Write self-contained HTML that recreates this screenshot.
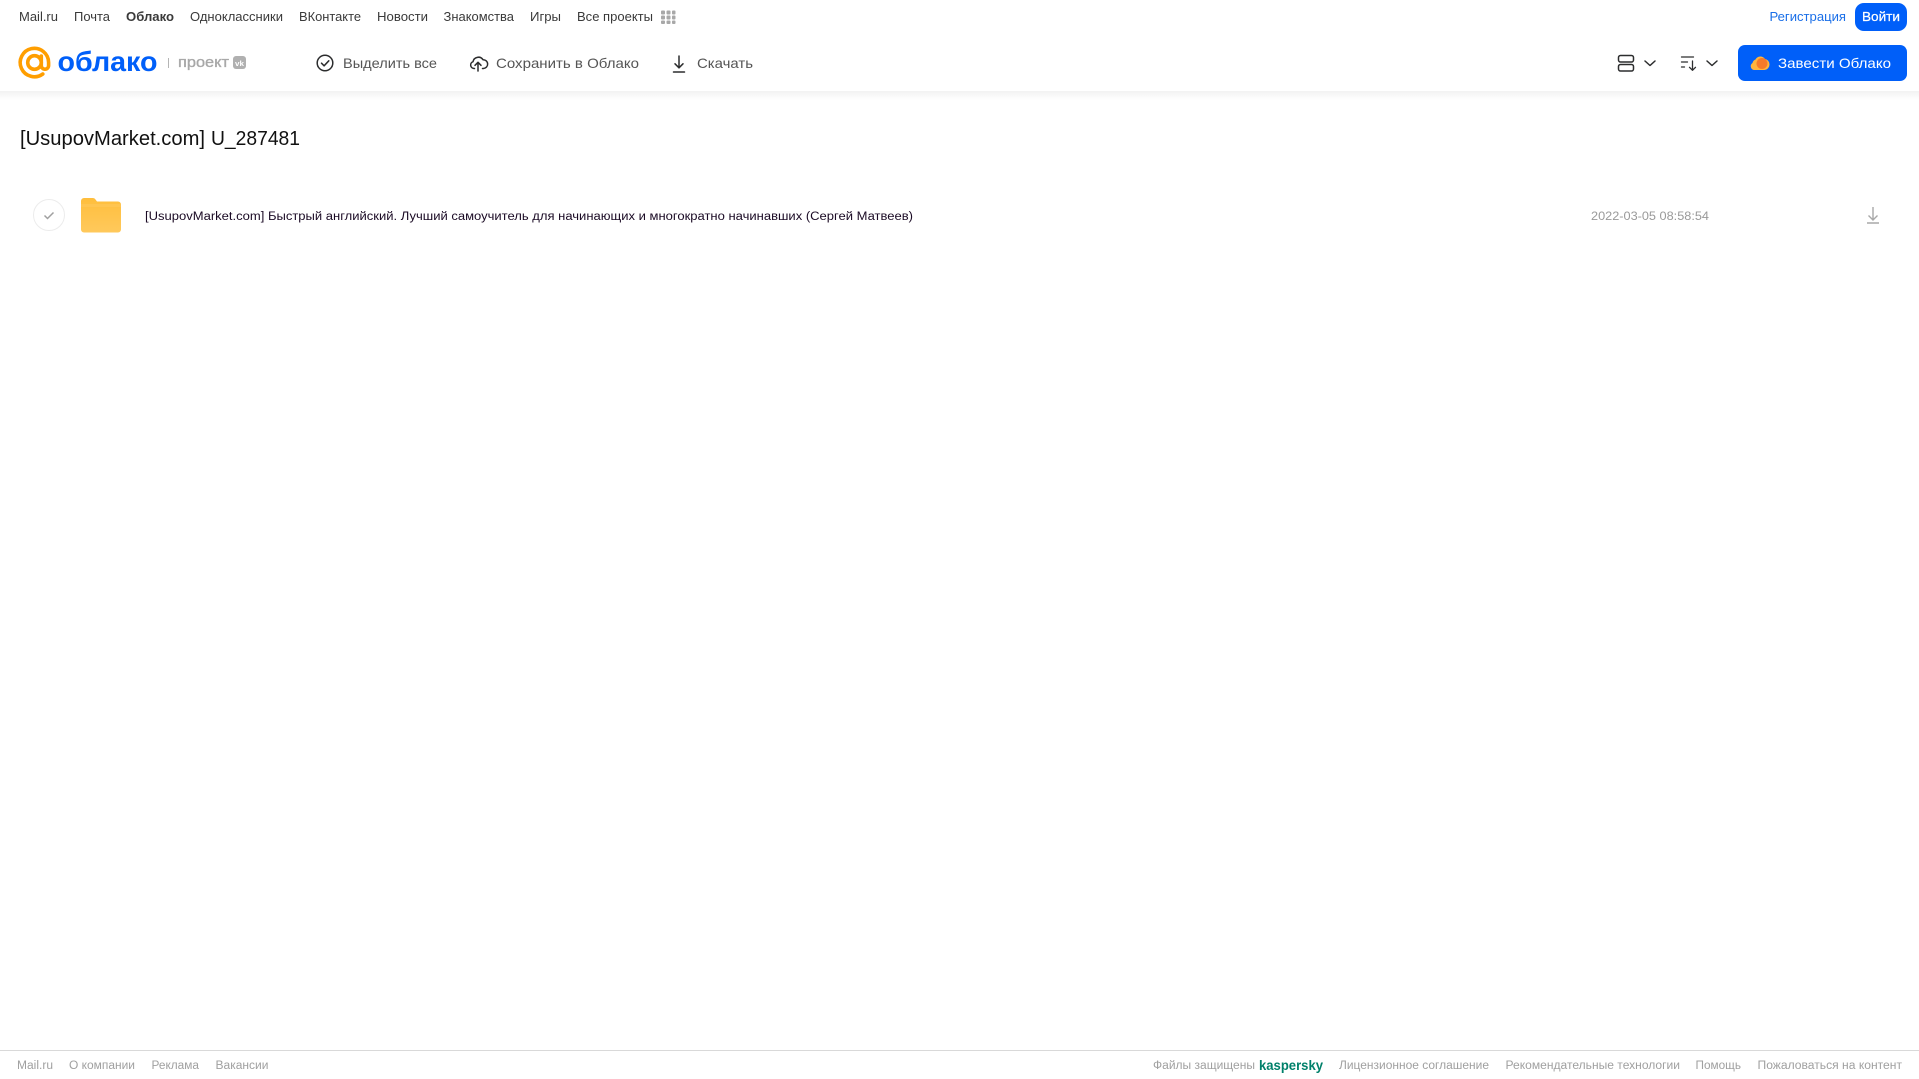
<!DOCTYPE html>
<html lang="ru"><head><meta charset="utf-8"><title>Облако</title>
<style>
html,body{margin:0;padding:0;background:#fff;width:1919px;height:1079px;overflow:hidden}
svg{display:block;position:absolute;left:0;top:0}
text{font-family:"Liberation Sans","Noto Sans CJK SC",sans-serif;white-space:pre}
.n{font-size:12.500px;fill:#3a3a3a}
.t{font-size:14px;fill:#555}
.f{font-size:11.500px;fill:#a0a0a0}
</style></head><body>
<svg width="1919" height="1079" viewBox="0 0 1919 1079" xmlns="http://www.w3.org/2000/svg">
<defs>
<linearGradient id="sh" x1="0" y1="0" x2="0" y2="1"><stop offset="0" stop-color="#f2f2f2"/><stop offset="1" stop-color="#fff"/></linearGradient>
<linearGradient id="fo" x1="0" y1="0" x2="0" y2="1"><stop offset="0" stop-color="#ffbe3c"/><stop offset="1" stop-color="#ffc95c"/></linearGradient>
</defs>
<rect x="0" y="91" width="1919" height="9" fill="url(#sh)"/>

<!-- top nav -->
<g class="n">
<text x="19" y="21" textLength="39" lengthAdjust="spacingAndGlyphs">Mail.ru</text>
<text x="74" y="21" textLength="36" lengthAdjust="spacingAndGlyphs">Почта</text>
<text x="126" y="21" textLength="48" lengthAdjust="spacingAndGlyphs" font-weight="700">Облако</text>
<text x="190" y="21" textLength="93" lengthAdjust="spacingAndGlyphs">Одноклассники</text>
<text x="299" y="21" textLength="62" lengthAdjust="spacingAndGlyphs">ВКонтакте</text>
<text x="377" y="21" textLength="51" lengthAdjust="spacingAndGlyphs">Новости</text>
<text x="443.500" y="21" textLength="70.500" lengthAdjust="spacingAndGlyphs">Знакомства</text>
<text x="530" y="21" textLength="31" lengthAdjust="spacingAndGlyphs">Игры</text>
<text x="577" y="21" textLength="76" lengthAdjust="spacingAndGlyphs">Все проекты</text>
</g>
<g fill="#a8a8a8">
<rect x="661" y="10.500" width="4" height="4" rx="1"/><rect x="666.500" y="10.500" width="4" height="4" rx="1"/><rect x="672" y="10.500" width="3.500" height="4" rx="1"/>
<rect x="661" y="15.500" width="4" height="4" rx="1"/><rect x="666.500" y="15.500" width="4" height="4" rx="1"/><rect x="672" y="15.500" width="3.500" height="4" rx="1"/>
<rect x="661" y="20.500" width="4" height="3.500" rx="1"/><rect x="666.500" y="20.500" width="4" height="3.500" rx="1"/><rect x="672" y="20.500" width="3.500" height="3.500" rx="1"/>
</g>
<text x="1769.500" y="21" font-size="12.500" fill="#1a6fe8" textLength="76.500" lengthAdjust="spacingAndGlyphs">Регистрация</text>
<rect x="1855" y="3" width="52" height="28" rx="9" fill="#005ff9"/>
<text x="1862" y="21" font-size="13" font-weight="400" fill="#fff" stroke="#fff" stroke-width=".25" textLength="38" lengthAdjust="spacingAndGlyphs">Войти</text>

<!-- logo -->
<g fill="none" stroke="#ff9e00" stroke-width="3.600" stroke-linecap="round">
<circle cx="34.500" cy="62.500" r="6.800"/>
<path d="M41.300 56 v9.500 a3.600 3.600 0 0 0 7.300 0 v-3 a14.200 14.200 0 1 0 -5.800 11.500"/>
</g>
<text x="57.500" y="71" font-size="28" font-weight="700" fill="#005ff9" textLength="100" lengthAdjust="spacingAndGlyphs">облако</text>
<rect x="168" y="58" width="1" height="10" fill="#b5b5b5"/>
<text x="178" y="67" font-size="14.500" font-weight="400" fill="#a8a8a8" stroke="#a8a8a8" stroke-width=".35" textLength="51" lengthAdjust="spacingAndGlyphs">проект</text>
<rect x="233" y="56" width="13" height="13" rx="3" fill="#b0b0b0"/>
<text x="235" y="66" font-size="7.500" font-weight="700" fill="#fff" textLength="9" lengthAdjust="spacingAndGlyphs">vk</text>

<!-- toolbar -->
<g fill="none" stroke="#2c2d2e" stroke-width="1.500" stroke-linecap="round" stroke-linejoin="round">
<circle cx="325" cy="63" r="7.800"/>
<path d="M321.500 63.200 l2.600 2.600 l4.700 -5"/>
<path d="M474.500 68.500 h-.5 a3.500 3.500 0 0 1 -1 -6.800 a5.500 5.500 0 0 1 10 -2 a4.400 4.400 0 0 1 .5 8.800 h-1"/>
<path d="M478 71 v-8.500 M475 65.300 l3 -3 l3 3"/>
<path d="M679 56 v11.500 M675 63.800 l4 4 l4 -4 M673.500 72 h11"/>
<rect x="1618.500" y="55.500" width="15" height="6.500" rx="2"/>
<rect x="1618.500" y="64.500" width="15" height="6.500" rx="2"/>
<path d="M1645 61 l5 4.500 l5 -4.500"/>
</g>
<g fill="none" stroke="#2c2d2e" stroke-width="1.300" stroke-linecap="round" stroke-linejoin="round">
<path d="M1681.500 57 h12 M1681.500 62 h6 M1681.500 67 h3 M1692.500 61 v9 M1689.500 67.300 l3 3 l3 -3"/>
<path d="M1707 61 l5 4.500 l5 -4.500" stroke-width="1.500"/>
</g>
<g class="t">
<text x="343" y="68" textLength="94" lengthAdjust="spacingAndGlyphs">Выделить все</text>
<text x="496" y="68" textLength="143" lengthAdjust="spacingAndGlyphs">Сохранить в Облако</text>
<text x="697" y="68" textLength="56" lengthAdjust="spacingAndGlyphs">Скачать</text>
</g>

<rect x="1738" y="45" width="169" height="36" rx="7" fill="#005ff9"/>
<path d="M1754.500 70 a3.800 3.800 0 0 1 -2 -7 c.5 -2 1.500 -3 3 -3.500 a5.500 5.500 0 0 1 9.500 -.5 a5.500 5.500 0 0 1 4.500 5.500 a5.500 5.500 0 0 1 -5 5.500 z" fill="#ffb43c"/>
<circle cx="1762" cy="63.500" r="5.500" fill="#f47a2a"/>
<text x="1778" y="68" font-size="14" fill="#fff" textLength="113" lengthAdjust="spacingAndGlyphs">Завести Облако</text>

<!-- title -->
<text x="20" y="145" font-size="20" fill="#111" textLength="185" lengthAdjust="spacingAndGlyphs">[UsupovMarket.com]</text>
<text x="211" y="145" font-size="20" fill="#111" textLength="89" lengthAdjust="spacingAndGlyphs">U_287481</text>

<!-- row -->
<circle cx="49" cy="215" r="15.500" fill="#fff" stroke="#ececec" stroke-width="1"/>
<path d="M44.500 215.500 l3 3 l6 -6" fill="none" stroke="#a0a0a0" stroke-width="1.500"/>
<path d="M81 201 a3 3 0 0 1 3 -3 h9 a3 3 0 0 1 2.500 1.500 l1.500 2 h21 a3 3 0 0 1 3 3 v25 a3 3 0 0 1 -3 3 h-34 a3 3 0 0 1 -3 -3 z" fill="url(#fo)"/>
<path d="M81 204 h40 v3 h-40 z" fill="#ffc95c" opacity=".55"/>
<text x="145" y="220" font-size="11.500" fill="#1a0a24" textLength="768" lengthAdjust="spacingAndGlyphs">[UsupovMarket.com] Быстрый английский. Лучший самоучитель для начинающих и многократно начинавших (Сергей Матвеев)</text>
<text x="1591" y="220" font-size="11.500" fill="#999" textLength="118" lengthAdjust="spacingAndGlyphs">2022-03-05 08:58:54</text>
<path d="M1873 207 v13 M1868.500 215.500 l4.500 4.500 l4.500 -4.500 M1867 223 h12" fill="none" stroke="#a8a8a8" stroke-width="1.400"/>

<!-- footer -->
<rect x="0" y="1050" width="1919" height="1" fill="#d9d9d9"/>
<g class="f">
<text x="17" y="1069" textLength="36" lengthAdjust="spacingAndGlyphs">Mail.ru</text>
<text x="69" y="1069" textLength="66" lengthAdjust="spacingAndGlyphs">О компании</text>
<text x="151.500" y="1069" textLength="47.500" lengthAdjust="spacingAndGlyphs">Реклама</text>
<text x="215.500" y="1069" textLength="53" lengthAdjust="spacingAndGlyphs">Вакансии</text>
<text x="1153" y="1069" textLength="102" lengthAdjust="spacingAndGlyphs">Файлы защищены</text>
<text x="1339" y="1069" textLength="150" lengthAdjust="spacingAndGlyphs">Лицензионное соглашение</text>
<text x="1505.500" y="1069" textLength="174.500" lengthAdjust="spacingAndGlyphs">Рекомендательные технологии</text>
<text x="1695.500" y="1069" textLength="45.500" lengthAdjust="spacingAndGlyphs">Помощь</text>
<text x="1757.500" y="1069" textLength="144.500" lengthAdjust="spacingAndGlyphs">Пожаловаться на контент</text>
</g>
<text x="1259" y="1070" font-size="13.500" font-weight="700" fill="#00806a" textLength="64" lengthAdjust="spacingAndGlyphs">kaspersky</text>
</svg>
</body></html>
